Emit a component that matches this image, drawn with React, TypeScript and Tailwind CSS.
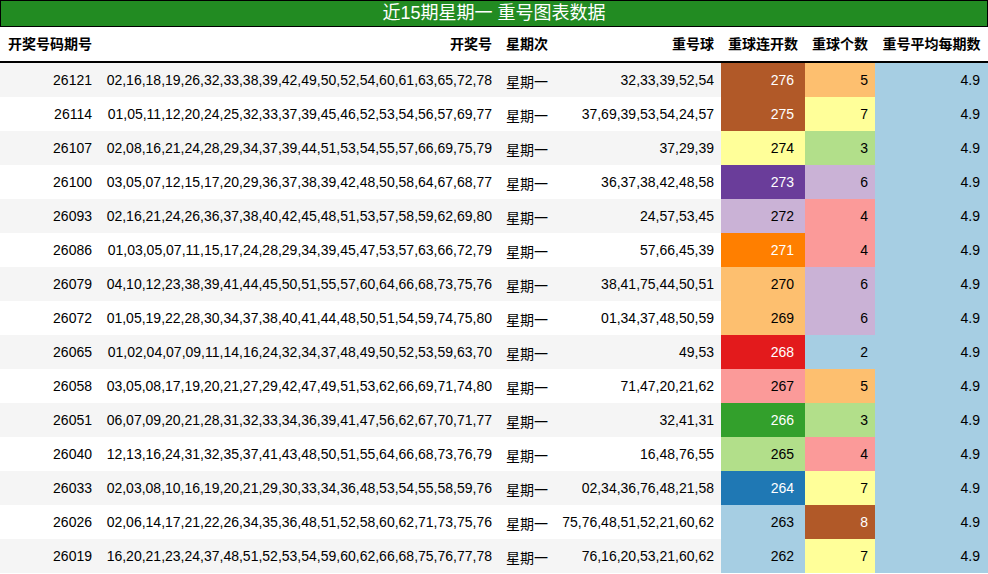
const C: Record<string, string> = {
  br: "bg-[#b15928] text-white", lo: "bg-[#fdbf6f]", lb: "bg-[#a6cee3]", y: "bg-[#ffff99]", lg: "bg-[#b2df8a]",
  pu: "bg-[#6a3d9a] text-white", lp: "bg-[#cab2d6]", pk: "bg-[#fb9a99]", or: "bg-[#ff7f00] text-white",
  rd: "bg-[#e31a1c] text-white", gr: "bg-[#33a02c] text-white", bl: "bg-[#1f78b4] text-white",
};
const rows: [string, string, string, string, string, string, string][] = [
  ["26121","02,16,18,19,26,32,33,38,39,42,49,50,52,54,60,61,63,65,72,78","32,33,39,52,54","276","br","5","lo"],
  ["26114","01,05,11,12,20,24,25,32,33,37,39,45,46,52,53,54,56,57,69,77","37,69,39,53,54,24,57","275","br","7","y"],
  ["26107","02,08,16,21,24,28,29,34,37,39,44,51,53,54,55,57,66,69,75,79","37,29,39","274","y","3","lg"],
  ["26100","03,05,07,12,15,17,20,29,36,37,38,39,42,48,50,58,64,67,68,77","36,37,38,42,48,58","273","pu","6","lp"],
  ["26093","02,16,21,24,26,36,37,38,40,42,45,48,51,53,57,58,59,62,69,80","24,57,53,45","272","lp","4","pk"],
  ["26086","01,03,05,07,11,15,17,24,28,29,34,39,45,47,53,57,63,66,72,79","57,66,45,39","271","or","4","pk"],
  ["26079","04,10,12,23,38,39,41,44,45,50,51,55,57,60,64,66,68,73,75,76","38,41,75,44,50,51","270","lo","6","lp"],
  ["26072","01,05,19,22,28,30,34,37,38,40,41,44,48,50,51,54,59,74,75,80","01,34,37,48,50,59","269","lo","6","lp"],
  ["26065","01,02,04,07,09,11,14,16,24,32,34,37,48,49,50,52,53,59,63,70","49,53","268","rd","2","lb"],
  ["26058","03,05,08,17,19,20,21,27,29,42,47,49,51,53,62,66,69,71,74,80","71,47,20,21,62","267","pk","5","lo"],
  ["26051","06,07,09,20,21,28,31,32,33,34,36,39,41,47,56,62,67,70,71,77","32,41,31","266","gr","3","lg"],
  ["26040","12,13,16,24,31,32,35,37,41,43,48,50,51,55,64,66,68,73,76,79","16,48,76,55","265","lg","4","pk"],
  ["26033","02,03,08,10,16,19,20,21,29,30,33,34,36,48,53,54,55,58,59,76","02,34,36,76,48,21,58","264","bl","7","y"],
  ["26026","02,06,14,17,21,22,26,34,35,36,48,51,52,58,60,62,71,73,75,76","75,76,48,51,52,21,60,62","263","lb","8","br"],
  ["26019","16,20,21,23,24,37,48,51,52,53,54,59,60,62,66,68,75,76,77,78","76,16,20,53,21,60,62","262","lb","7","y"],
];
const cols = "grid grid-cols-[100px_400px_55px_166px_84px_70px_113px]";
export default function App() {
  return (
    <div className="w-[988px] h-[574px] overflow-hidden bg-white text-[14px] text-black" style={{ fontFamily: '"Liberation Sans","Noto Sans CJK SC",sans-serif' }}>
      <div className="h-[27px] bg-[#228b22] border border-black text-white text-[18px] flex items-center justify-center">近15期星期一 重号图表数据</div>
      <div className={`${cols} h-[36px] items-center font-bold border-b-2 border-black`}>
        <div className="pl-[8px]">开奖号码期号</div>
        <div className="text-right pr-[8px]">开奖号</div>
        <div className="pl-[6px]">星期次</div>
        <div className="text-right pr-[7px]">重号球</div>
        <div className="text-center">重球连开数</div>
        <div className="text-center">重球个数</div>
        <div className="text-center">重号平均每期数</div>
      </div>
      {rows.map((r, i) => (
        <div key={r[0]} className={`${cols} h-[34px] ${i % 2 === 0 ? "bg-[#f5f5f5]" : "bg-white"}`}>
          <div className="flex items-center justify-end pr-[8px]">{r[0]}</div>
          <div className="flex items-center justify-end pr-[8px]">{r[1]}</div>
          <div className="flex items-center pl-[6px] pt-[4px]">星期一</div>
          <div className="flex items-center justify-end pr-[7px]">{r[2]}</div>
          <div className={`flex items-center justify-end pr-[11px] ${C[r[4]]}`}>{r[3]}</div>
          <div className={`flex items-center justify-end pr-[7px] ${C[r[6]]}`}>{r[5]}</div>
          <div className="flex items-center justify-end pr-[8px] bg-[#a6cee3]">4.9</div>
        </div>
      ))}
    </div>
  );
}
